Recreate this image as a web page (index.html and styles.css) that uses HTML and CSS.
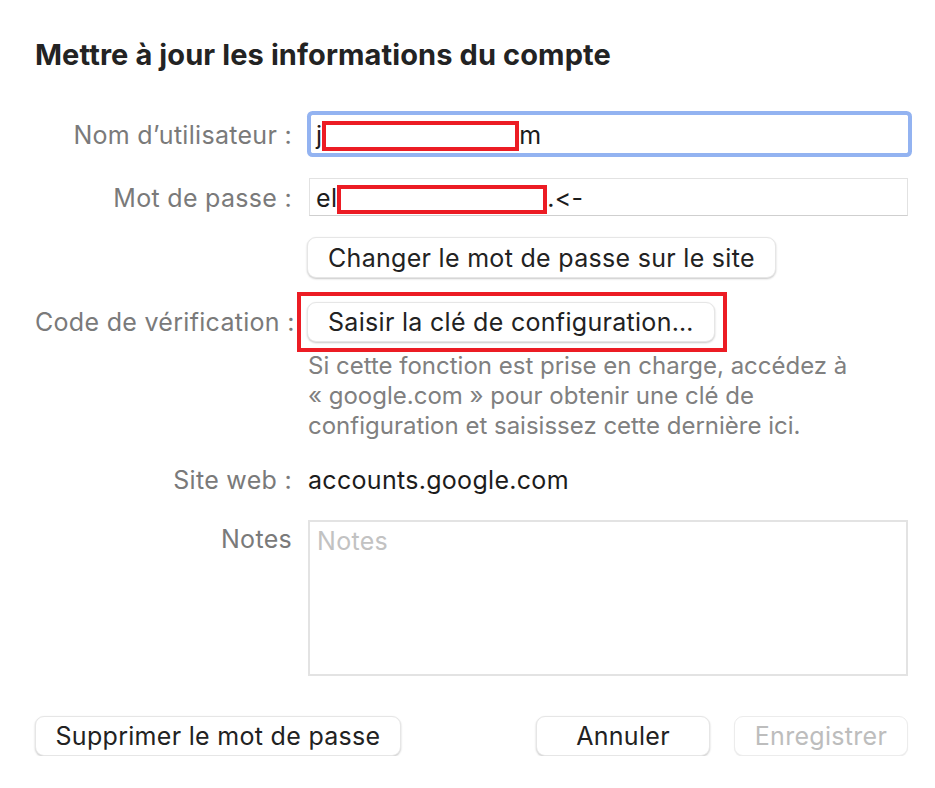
FILE: index.html
```html
<!DOCTYPE html>
<html lang="fr">
<head>
  <meta charset="UTF-8" />
  <meta name="viewport" content="width=device-width, initial-scale=1.0"/>
  <title>Mettre à jour les informations du compte</title>
  <link rel="stylesheet" href="styles.css">
</head>
<body>
  <div class="dialog">
    <h1 class="title">Mettre à jour les informations du compte</h1>

    <div class="form">
      <div class="label row-user">Nom d’utilisateur :</div>
      <div class="field focused row-user"><span>j</span><span class="redact redact-user"></span><span>m</span></div>

      <div class="label row-pass">Mot de passe :</div>
      <div class="field row-pass"><span>el</span><span class="redact redact-pass"></span><span>.&lt;-</span></div>

      <div class="row-change"></div>
      <div class="row-change"><button class="btn">Changer le mot de passe sur le site</button></div>

      <div class="label row-code">Code de vérification :</div>
      <div class="row-code"><div class="highlight"><button class="btn">Saisir la clé de configuration…</button></div></div>

      <div></div>
      <p class="help">Si cette fonction est prise en charge, accédez à<br>« google.com » pour obtenir une clé de<br>configuration et saisissez cette dernière ici.</p>

      <div class="label row-site">Site web :</div>
      <div class="value row-site">accounts.google.com</div>

      <div class="label row-notes">Notes</div>
      <div class="notes row-notes"><span class="placeholder">Notes</span></div>
    </div>

    <div class="footer">
      <button class="btn btn-wide">Supprimer le mot de passe</button>
      <div class="footer-right">
        <button class="btn btn-action">Annuler</button>
        <button class="btn btn-action" disabled>Enregistrer</button>
      </div>
    </div>
  </div>
</body>
</html>
```

FILE: styles.css
```css
body {
  margin: 0;
  background: #ffffff;
  font-family: 'Inter', 'Noto Sans', sans-serif;
  font-feature-settings: "calt" 0, "liga" 0;
  color: #262626;
}

.dialog {
  width: 873px;
  padding: 37px 27px 0 35px;
}

.title {
  margin: 0;
  font-size: 29px;
  line-height: 36px;
  font-weight: 700;
  letter-spacing: 0.1px;
  color: #232323;
}

.form {
  display: grid;
  grid-template-columns: 257px 1fr;
  column-gap: 16px;
  align-items: center;
  font-size: 25px;
  line-height: 30px;
  letter-spacing: 0.3px;
}

.label {
  text-align: right;
  color: #7a7a7a;
  white-space: nowrap;
}

.row-user { margin-top: 42px; }
.row-pass { margin-top: 25px; }
.row-change { margin-top: 21px; }
.row-code { margin-top: 14px; }
.row-site { margin-top: 24px; }
.row-notes { margin-top: 25px; align-self: start; }

.label.row-user,
.label.row-pass {
  padding-top: 2px;
}

.label.row-notes {
  padding-top: 4px;
}

.field {
  height: 38px;
  box-sizing: border-box;
  border: 1px solid #e2e2e2;
  border-bottom-color: #cfcfcf;
  padding: 2px 6px 0;
  display: flex;
  align-items: center;
  color: #1c1c1c;
  margin-left: 1px;
}

.field.focused {
  margin-left: 3px;
  border-color: #ffffff;
  border-radius: 2px;
  box-shadow: 0 0 0 4px #93b3f1;
  padding-left: 4px;
}

.redact {
  display: inline-block;
  box-sizing: border-box;
  border: 4px solid #ec1c24;
  background: #ffffff;
}

.redact-user {
  width: 197px;
  height: 30px;
  margin-top: 2px;
}

.redact-pass {
  width: 210px;
  height: 29px;
  margin-top: 3px;
}

.btn {
  display: block;
  font-family: inherit;
  font-feature-settings: inherit;
  font-size: 25px;
  letter-spacing: 0.3px;
  white-space: nowrap;
  color: #222222;
  background: #ffffff;
  border: 1px solid #e6e6e6;
  border-radius: 9px;
  box-shadow: 0 1px 2px rgba(0, 0, 0, 0.22);
  height: 40px;
  padding: 0 20px;
  cursor: pointer;
}

.btn:disabled {
  color: #bdbdbd;
  box-shadow: 0 1px 1px rgba(0, 0, 0, 0.08);
  border-color: #ececec;
}

.row-change .btn {
  margin-left: -1px;
  height: 41px;
}

.highlight {
  display: flex;
  width: fit-content;
  border: 4px solid #ec1c24;
  padding: 6px 8px 6px 6px;
  margin-left: -11px;
}

.help {
  margin: -1px 0 0;
  font-size: 24px;
  line-height: 30px;
  letter-spacing: 0;
  color: #808080;
}

.value {
  color: #1c1c1c;
}

.notes {
  height: 156px;
  box-sizing: border-box;
  border: 2px solid #e3e3e3;
  padding: 4px 7px;
}

.placeholder {
  color: #c2c2c2;
}

.footer {
  margin-top: 40px;
  display: flex;
  justify-content: space-between;
}

.footer-right {
  display: flex;
  gap: 24px;
}

.btn-wide {
  width: 366px;
  padding: 0;
}

.btn-action {
  width: 174px;
  padding: 0;
}
```
